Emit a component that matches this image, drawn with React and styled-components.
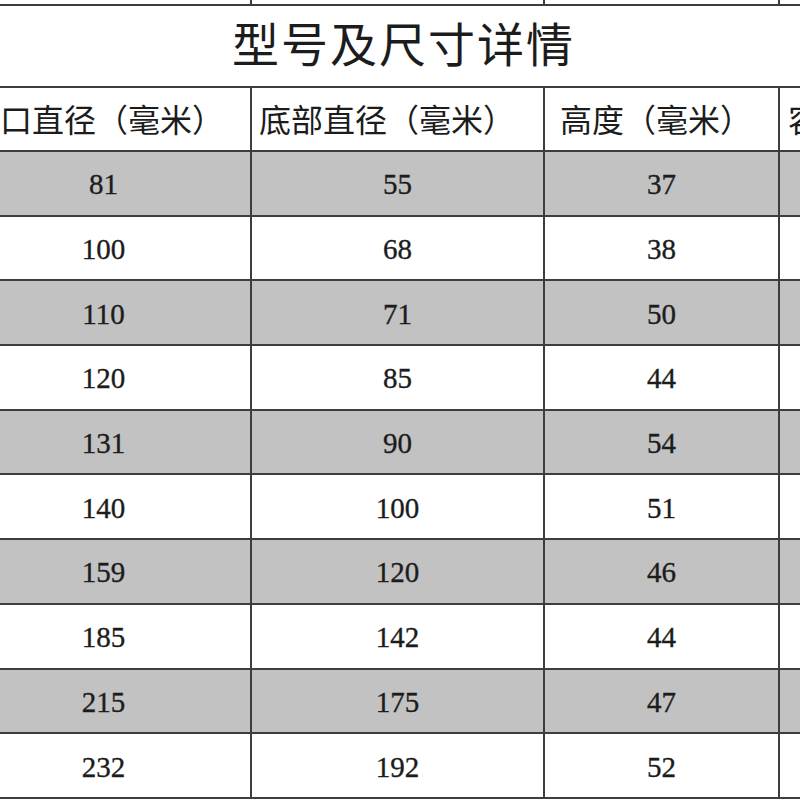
import styled, { createGlobalStyle } from 'styled-components';

const GlobalStyle = createGlobalStyle`
  html, body {
    margin: 0;
    padding: 0;
    background: #fff;
    overflow: hidden;
  }
`;

const columns = ['杯口直径（毫米）', '底部直径（毫米）', '高度（毫米）', '容量（毫升）'];
const widths = [295, 293, 235, 200];

const rows = [
  [81, 55, 37, ''],
  [100, 68, 38, ''],
  [110, 71, 50, ''],
  [120, 85, 44, ''],
  [131, 90, 54, ''],
  [140, 100, 51, ''],
  [159, 120, 46, ''],
  [185, 142, 44, ''],
  [215, 175, 47, ''],
  [232, 192, 52, ''],
];

const Page = styled.div`
  width: 800px;
  height: 800px;
  overflow: hidden;
`;

const Table = styled.table`
  width: ${widths.reduce((a, b) => a + b, 0)}px;
  margin-left: -45px;
  margin-top: -59px;
  border-collapse: collapse;
  table-layout: fixed;
  color: #1c1c1c;
`;

const Cell = styled.td`
  border: 2px solid #3d3d3d;
  padding: ${(p) => (p.$num ? '3px 0 0' : '0')};
  height: ${(p) => p.$h}px;
  background: ${(p) => (p.$shade ? '#c2c2c2' : '#fff')};
  text-align: center;
  vertical-align: middle;
  font-family: 'Liberation Serif', 'Noto Sans CJK SC', serif;
  font-size: 29px;
  -webkit-text-stroke: 0.35px #1c1c1c;
`;

const TitleCell = styled(Cell)`
  font-family: 'Noto Sans CJK SC', sans-serif;
  font-size: 47px;
  letter-spacing: 2px;
  padding: 0 128px 10px 0;
  -webkit-text-stroke: 0;
`;

const HeadCell = styled(Cell)`
  font-family: 'Noto Sans CJK SC', sans-serif;
  font-size: 32px;
  white-space: nowrap;
  overflow: hidden;
  text-align: left;
  padding-left: ${(p) => p.$pad}px;
  padding-bottom: 3px;
  -webkit-text-stroke: 0;
`;

export default function App() {
  return (
    <Page>
      <GlobalStyle />
      <Table>
        <colgroup>
          {widths.map((w, i) => (
            <col key={i} style={{ width: w }} />
          ))}
        </colgroup>
        <tbody>
          <tr>
            {widths.map((w, i) => (
              <Cell key={i} $h={61} />
            ))}
          </tr>
          <tr>
            <TitleCell colSpan={4} $h={70}>型号及尺寸详情</TitleCell>
          </tr>
          <tr>
            {columns.map((c, i) => (
              <HeadCell key={c} $h={59} $pad={[11, 7, 15, 8][i]}>{c}</HeadCell>
            ))}
          </tr>
          {rows.map((r, i) => (
            <tr key={i}>
              {r.map((v, j) => (
                <Cell key={j} $num $h={59.7} $shade={i % 2 === 0}>{v}</Cell>
              ))}
            </tr>
          ))}
        </tbody>
      </Table>
    </Page>
  );
}
